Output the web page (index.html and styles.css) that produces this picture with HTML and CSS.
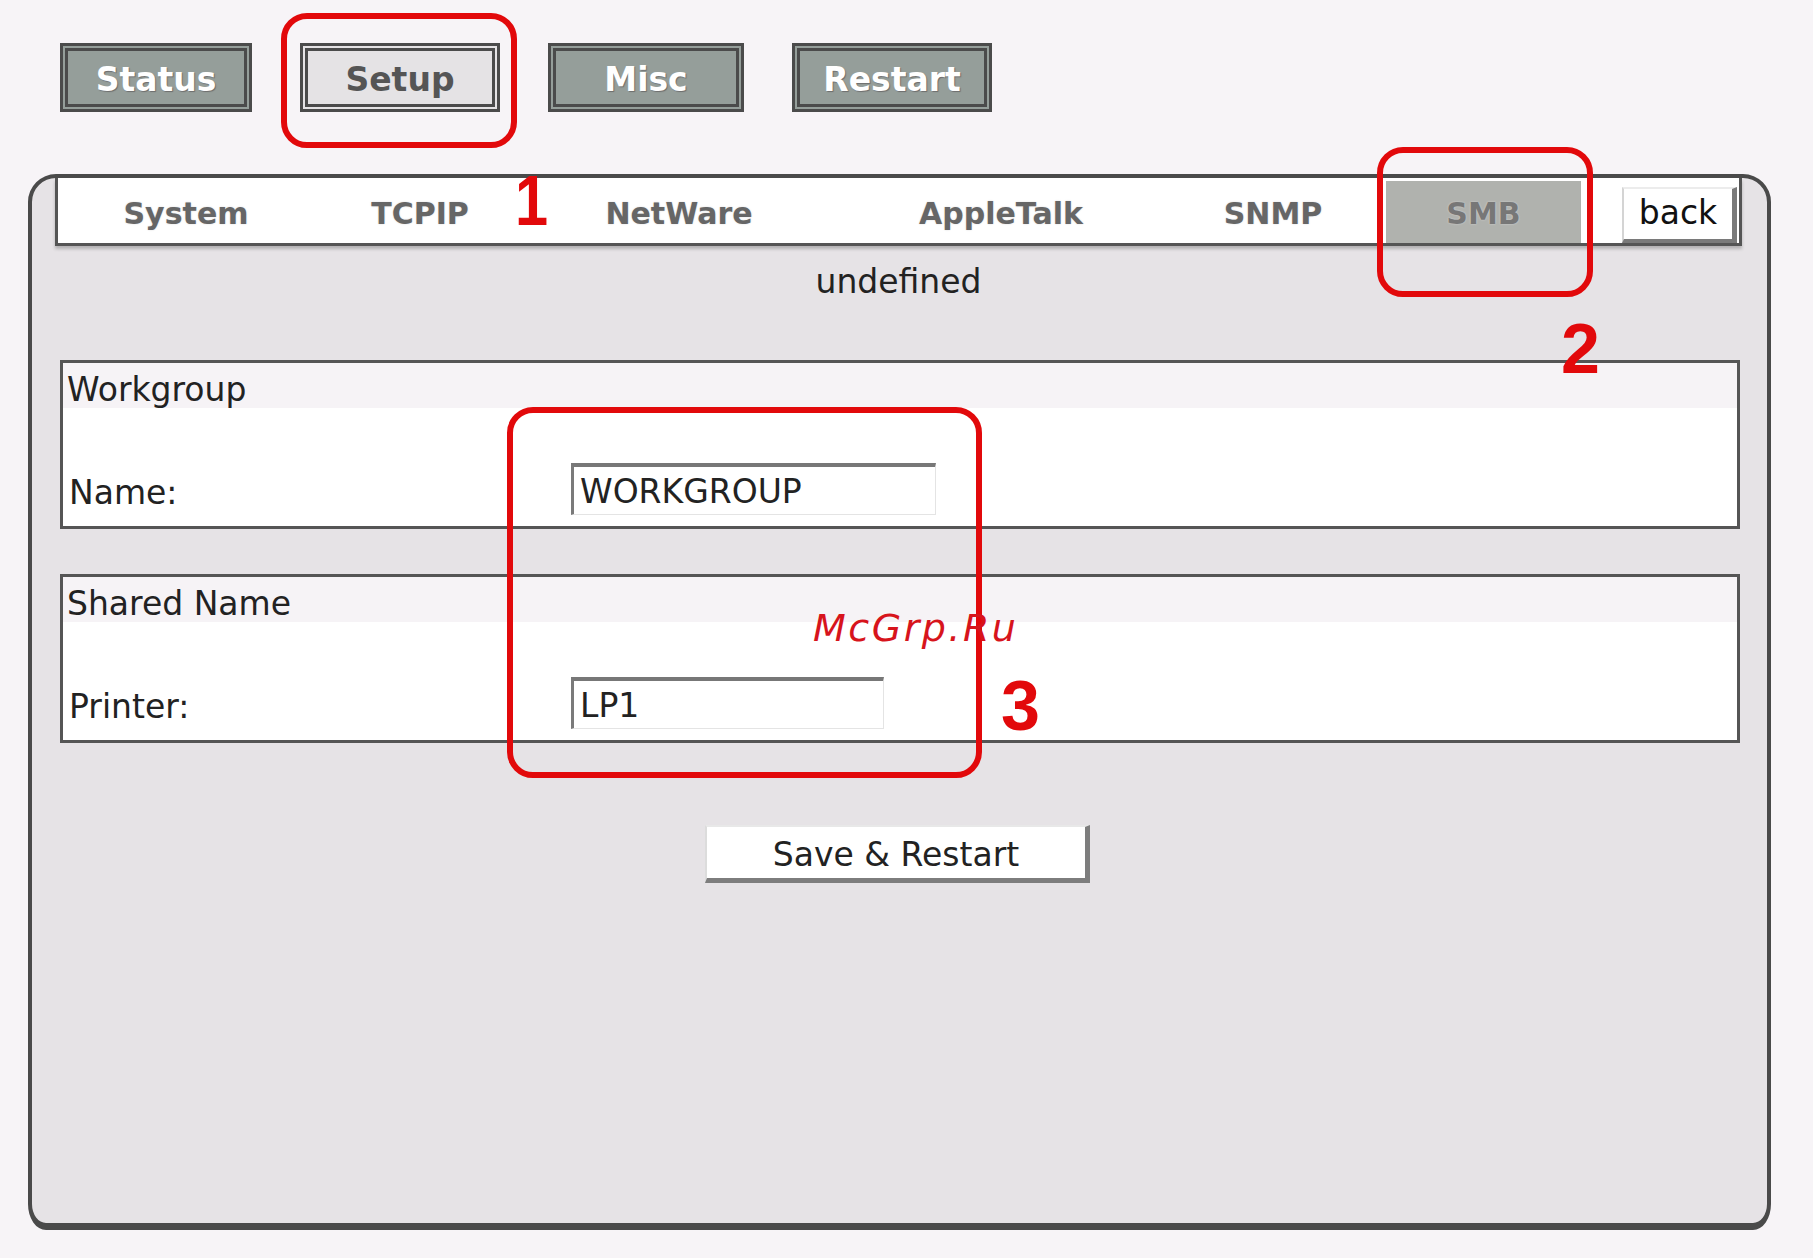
FILE: index.html
```html
<!DOCTYPE html>
<html>
<head>
<meta charset="utf-8">
<title>SMB Setup</title>
<link rel="stylesheet" href="styles.css">
</head>
<body>
<div class="topnav">
  <div class="navbtn w-status">Status</div>
  <div class="navbtn w-setup active">Setup</div>
  <div class="navbtn w-misc">Misc</div>
  <div class="navbtn w-restart">Restart</div>
</div>

<div class="panel">
  <div class="tabbar">
    <div class="tab t-system">System</div>
    <div class="tab t-tcpip">TCPIP</div>
    <div class="tab t-netware">NetWare</div>
    <div class="tab t-appletalk">AppleTalk</div>
    <div class="tab t-snmp">SNMP</div>
    <div class="tab t-smb current">SMB</div>
    <div class="tab-spacer"></div>
    <div class="backbtn">back</div>
  </div>

  <div class="status-line">undefined</div>

  <div class="group">
    <div class="group-head">Workgroup</div>
    <div class="group-row">
      <div class="label">Name:</div>
      <div class="field w-name">WORKGROUP</div>
    </div>
  </div>

  <div class="group second">
    <div class="group-head">Shared Name</div>
    <div class="group-row">
      <div class="label">Printer:</div>
      <div class="field w-printer">LP1</div>
    </div>
  </div>

  <div class="actions">
    <div class="savebtn">Save &amp; Restart</div>
  </div>
</div>

<div class="mark box1"></div>
<div class="mark box2"></div>
<div class="mark box3"></div>
<div class="num n1">1</div>
<div class="num n2">2</div>
<div class="num n3">3</div>
<div class="watermark">McGrp.Ru</div>
</body>
</html>
```

FILE: styles.css
```css
html, body {
  margin: 0;
  padding: 0;
}
body {
  background: #f7f4f7;
  font-family: "DejaVu Sans", Verdana, sans-serif;
  color: #222;
  width: 1813px;
  height: 1258px;
  position: relative;
  overflow: hidden;
}

/* top navigation */
.topnav {
  display: flex;
  gap: 48px;
  padding: 43px 0 0 60px;
  height: 69px;
}
.navbtn {
  box-sizing: border-box;
  height: 69px;
  border: 8px double #4b4b4b;
  background: #959e9a;
  color: #ffffff;
  font-weight: bold;
  font-size: 33px;
  padding-top: 4px;
  line-height: 49px;
  text-align: center;
  text-shadow: 1px 1px 1px #6d6d6d;
}
.navbtn.active {
  background: #e5e3e5;
  color: #555555;
  text-shadow: none;
}
.w-status { width: 192px; }
.w-setup { width: 200px; }
.w-misc { width: 196px; }
.w-restart { width: 200px; }

/* panel */
.panel {
  box-sizing: border-box;
  margin: 62px 0 0 28px;
  width: 1743px;
  height: 1056px;
  background: #e6e3e6;
  border: 4px solid #4a4a4a;
  border-bottom-width: 7px;
  border-radius: 28px 28px 18px 18px / 28px 28px 26px 26px;
  padding: 0 25px 0 23px;
}

.tabbar {
  display: flex;
  align-items: stretch;
  height: 65px;
  background: #ffffff;
  border: 3px solid #555555;
  border-top: 0;
  box-shadow: 0 3px 3px #b4b2b4;
}
.tab {
  box-sizing: border-box;
  font-weight: bold;
  font-size: 30px;
  color: #666666;
  text-align: center;
  padding-top: 7px;
  line-height: 58px;
  text-shadow: 0 0 2px #d8d8d8;
}
.t-system { width: 256px; }
.t-tcpip { width: 212px; }
.t-netware { width: 306px; }
.t-appletalk { width: 338px; }
.t-snmp { width: 216px; padding-right: 10px; }
.t-smb { width: 195px; }
.tab.current {
  background: #b0b2ae;
  color: #777777;
  margin-top: 3px;
  padding-top: 4px;
  line-height: 58px;
}
.tab-spacer { width: 41px; }
.backbtn {
  box-sizing: border-box;
  width: 115px;
  margin-top: 9px;
  background: #ffffff;
  border-top: 2px solid #ececec;
  border-left: 2px solid #d4d4d4;
  border-right: 5px solid #7a7a7a;
  border-bottom: 4px solid #7a7a7a;
  font-size: 33px;
  line-height: 48px;
  color: #111111;
  text-align: center;
}

.status-line {
  margin-top: 16px;
  text-align: center;
  font-size: 33px;
  line-height: 40px;
  color: #222222;
}

/* groups */
.group {
  margin: 58px 2px 0 5px;
  background: #ffffff;
  border: 3px solid #555555;
}
.group.second {
  margin-top: 45px;
}
.group-head {
  box-sizing: border-box;
  height: 45px;
  padding: 8px 0 0 4px;
  line-height: 37px;
  font-size: 33px;
  background: #f6f3f6;
  color: #222222;
}
.group-row {
  display: grid;
  grid-template-columns: 508px 1fr;
  align-items: center;
  padding: 55px 0 11px 0;
}
.label {
  padding-left: 6px;
  padding-top: 7px;
  font-size: 33px;
  line-height: 40px;
  color: #222222;
}
.field {
  box-sizing: border-box;
  height: 52px;
  background: #ffffff;
  border-top: 4px solid #777777;
  border-left: 3px solid #7a7a7a;
  border-right: 1px solid #e4e4e4;
  border-bottom: 1px solid #e4e4e4;
  padding-left: 6px;
  padding-top: 3px;
  font-size: 33px;
  line-height: 43px;
  color: #222222;
}
.w-name { width: 365px; }
.w-printer { width: 313px; }

.actions {
  display: flex;
  justify-content: center;
  margin-top: 82px;
}
.savebtn {
  box-sizing: border-box;
  width: 385px;
  height: 58px;
  margin-right: 2px;
  background: #ffffff;
  border-top: 2px solid #e8e8e8;
  border-left: 2px solid #dcdcdc;
  border-right: 5px solid #7d7d7d;
  border-bottom: 5px solid #7d7d7d;
  font-size: 33px;
  padding-top: 4px;
  line-height: 47px;
  text-align: center;
  color: #222222;
}

/* red annotations overlaid on the screenshot */
.mark {
  position: absolute;
  box-sizing: border-box;
  border: 6px solid #e2090b;
  border-radius: 26px;
}
.box1 { left: 281px; top: 13px; width: 236px; height: 135px; }
.box2 { left: 1377px; top: 147px; width: 216px; height: 150px; }
.box3 { left: 507px; top: 407px; width: 475px; height: 371px; }

.num {
  position: absolute;
  font-family: "Liberation Sans", Arial, sans-serif;
  font-weight: bold;
  font-size: 70px;
  line-height: 70px;
  color: #e2090b;
}
.n1 { left: 512px; top: 166px; transform: scaleX(0.85); }
.n2 { left: 1561px; top: 314px; }
.n3 { left: 1001px; top: 671px; }

.watermark {
  position: absolute;
  left: 813px;
  top: 606px;
  font-family: "DejaVu Sans", sans-serif;
  font-style: italic;
  font-size: 38px;
  line-height: 44px;
  letter-spacing: 2.5px;
  color: #d7141c;
}
```
